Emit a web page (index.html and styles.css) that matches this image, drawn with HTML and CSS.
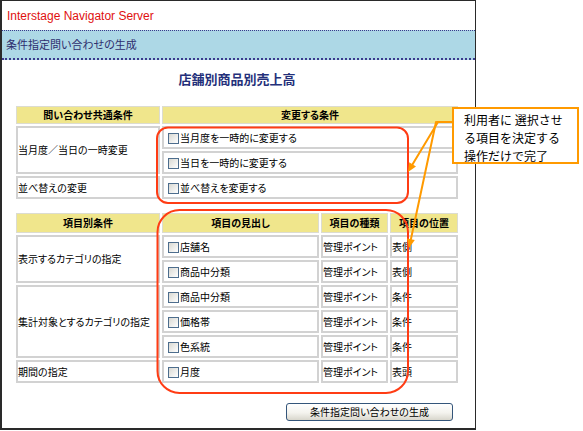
FILE: index.html
```html
<!DOCTYPE html>
<html lang="ja">
<head>
<meta charset="utf-8">
<title>条件指定問い合わせの生成</title>
<link rel="stylesheet" href="styles.css">
</head>
<body>
<div class="window">
  <div class="brand">Interstage Navigator Server</div>
  <div class="band">条件指定問い合わせの生成</div>
  <div class="content">
    <h1 class="title">店舗別商品別売上高</h1>
    <table class="grid grid1">
      <colgroup><col class="w-a"><col class="w-b"></colgroup>
      <tr><th>問い合わせ共通条件</th><th>変更する条件</th></tr>
      <tr><td rowspan="2">当月度／当日の一時変更</td><td><span class="cb"></span>当月度を一時的に変更する</td></tr>
      <tr><td><span class="cb"></span>当日を一時的に変更する</td></tr>
      <tr><td>並べ替えの変更</td><td><span class="cb"></span>並べ替えを変更する</td></tr>
    </table>
    <table class="grid grid2">
      <colgroup><col class="w-a"><col class="w-c"><col class="w-d"><col class="w-e"></colgroup>
      <tr><th>項目別条件</th><th>項目の見出し</th><th>項目の種類</th><th>項目の位置</th></tr>
      <tr><td rowspan="2">表示するカテゴリの指定</td><td><span class="cb"></span>店舗名</td><td>管理ポイント</td><td>表側</td></tr>
      <tr><td><span class="cb"></span>商品中分類</td><td>管理ポイント</td><td>表側</td></tr>
      <tr><td rowspan="3">集計対象とするカテゴリの指定</td><td><span class="cb"></span>商品中分類</td><td>管理ポイント</td><td>条件</td></tr>
      <tr><td><span class="cb"></span>価格帯</td><td>管理ポイント</td><td>条件</td></tr>
      <tr><td><span class="cb"></span>色系統</td><td>管理ポイント</td><td>条件</td></tr>
      <tr><td>期間の指定</td><td><span class="cb"></span>月度</td><td>管理ポイント</td><td>表頭</td></tr>
    </table>
    <div class="actions"><button class="btn" type="button">条件指定問い合わせの生成</button></div>
  </div>
</div>

<svg class="marks" width="583" height="431" viewBox="0 0 583 431" xmlns="http://www.w3.org/2000/svg">
  <rect x="157" y="127.5" width="251" height="75.5" rx="11" fill="none" stroke="#ff3c14" stroke-width="2"/>
  <rect x="157.5" y="210" width="250.5" height="183" rx="22" fill="none" stroke="#ff3c14" stroke-width="2"/>
  <g stroke="#ff9a00" stroke-width="2" fill="none" stroke-linecap="round">
    <path d="M453 122 H437"/>
    <path d="M438 122 L412.6 164.3"/>
    <path d="M436 122 L410.9 239.2"/>
  </g>
  <g fill="#ff9a00">
    <polygon points="408,172 416,166.4 409.2,162.2"/>
    <polygon points="409,248 414.8,240 407,238.4"/>
  </g>
</svg>
<div class="callout">利用者に 選択させ<br>る項目を決定する<br>操作だけで完了</div>
</body>
</html>
```
FILE: styles.css
```css
* { box-sizing: border-box; }
html, body { margin: 0; padding: 0; background: #fff; }
body {
  width: 583px;
  height: 431px;
  position: relative;
  overflow: hidden;
  font-family: "Noto Sans CJK JP", sans-serif;
  color: #000;
}
.window {
  width: 476px;
  height: 430px;
  border: 1px solid #2a2a2a;
  border-left-width: 2px;
  border-bottom-width: 2px;
}
.brand {
  height: 29px;
  padding-left: 5px;
  font: 12px/30px "Liberation Sans", Arial, sans-serif;
  color: #e01010;
}
.band {
  height: 30px;
  background: #add8e6;
  border-top: 1px dotted #3a3a8c;
  border-bottom: 2px dotted #3a3a8c;
  padding-left: 4px;
  font-size: 11px;
  line-height: 27px;
  color: #2e2e6e;
  font-feature-settings: "palt";
}
.content { margin-left: 12px; width: 446px; }
.title {
  margin: 9px 0 0;
  height: 20px;
  font-size: 13px;
  line-height: 20px;
  text-align: center;
  color: #24307a;
  font-weight: bold;
  font-feature-settings: "palt";
}
.grid {
  table-layout: fixed;
  width: 446px;
  border-collapse: separate;
  border-spacing: 2px;
  margin-top: 15px;
  font-feature-settings: "palt";
}
.grid2 { margin-top: 10px; }
.w-a { width: 144px; }
.w-b { width: 296px; }
.w-c { width: 157px; }
.w-d { width: 67px; }
.w-e { width: 68px; }
.grid th {
  height: 18px;
  padding: 0;
  background: #f0e68c;
  border: 1px solid #dcdcd0;
  font-size: 10px;
  font-weight: bold;
  text-align: center;
  vertical-align: middle;
  line-height: 14px;
}
.grid2 th { height: 20px; }
.grid td {
  height: 23px;
  padding: 0;
  border: 2px solid #d2d2d2;
  font-size: 10px;
  line-height: 14px;
  vertical-align: middle;
  white-space: nowrap;
  overflow: hidden;
}
.cb {
  display: inline-block;
  width: 11px;
  height: 11px;
  margin: 0 1px 0 4px;
  border: 1px solid #4d6d8d;
  background: linear-gradient(135deg, #d8d8d2, #ffffff);
  vertical-align: -2px;
}
.actions { margin-top: 12px; padding-right: 7px; text-align: right; }
.btn {
  width: 167px;
  height: 18px;
  padding: 0;
  border: 1px solid #34557a;
  border-radius: 3px;
  background: linear-gradient(#ffffff 0%, #f4f3ee 55%, #d8d6cc 100%);
  font-family: "Noto Sans CJK JP", sans-serif;
  font-size: 10px;
  line-height: 16px;
  color: #000;
  font-feature-settings: "palt";
}
.marks { position: absolute; left: 0; top: 0; pointer-events: none; }
.callout {
  position: absolute;
  left: 452px;
  top: 107px;
  width: 127px;
  height: 57px;
  padding: 2px 0 0 10px;
  border: 2px solid #ff9a00;
  background: #fff;
  font-size: 12px;
  line-height: 18px;
  color: #000;
}
```
